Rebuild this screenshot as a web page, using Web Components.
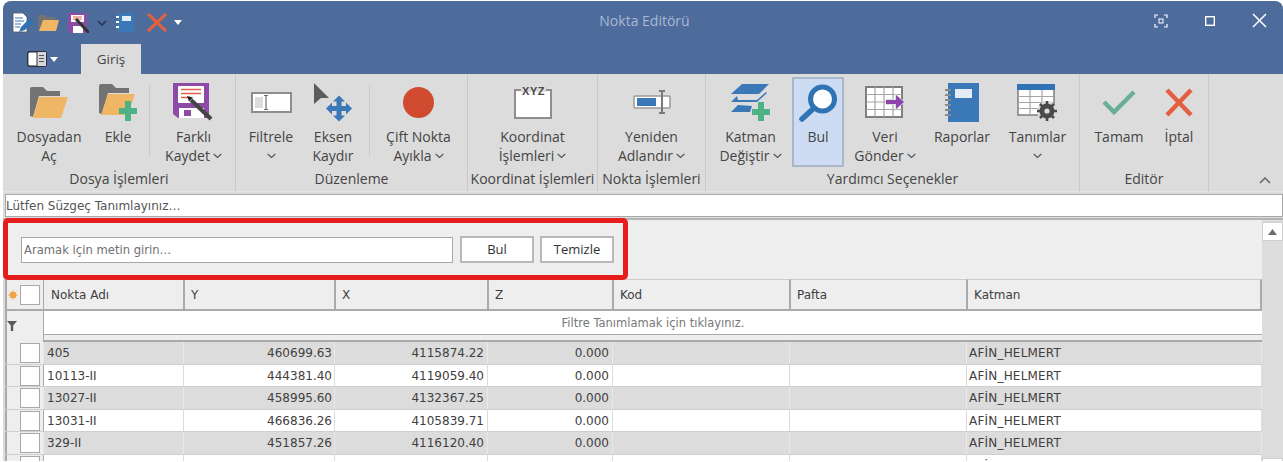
<!DOCTYPE html>
<html lang="tr">
<head>
<meta charset="utf-8">
<title>Nokta Editörü</title>
<style>
  html, body { margin: 0; padding: 0; background: #fff; overflow: hidden; }
  body { padding: 1px 0 0 3px; height: 461px; box-sizing: border-box; font-family: "Open Sans", "Noto Sans", sans-serif; }
  svg { display: block; }
</style>
</head>
<body>
<editor-window>
  <title-bar title="Nokta Editörü">
    <quick-bar slot="quick"></quick-bar>
  </title-bar>
  <editor-ribbon>
    <ribbon-group label="Dosya İşlemleri" cols="76px 62px 1px 85px" pad="8" width="233">
      <ribbon-button line1="Dosyadan" line2="Aç">
        <svg slot="icon" width="38" height="31" viewBox="0 0 38 31"><path d="M0 29V2q0-2 2-2h11l4 4h13v5H9L3 30z" fill="#737373"/><path d="M9 10h29l-7 21H3z" fill="#efb765"/></svg>
      </ribbon-button>
      <ribbon-button line1="Ekle">
        <svg slot="icon" width="38" height="37" viewBox="0 0 38 37"><path d="M0 29V2q0-2 2-2h11l4 4h13v5H9L3 30z" fill="#737373"/><path d="M9 10h27l-7 21H2z" fill="#efb765"/><path d="M26 17h6v7h6v6h-6v7h-6v-7h-6v-6h6z" fill="#4fb286"/></svg>
      </ribbon-button>
      <ribbon-sep></ribbon-sep>
      <ribbon-button line1="Farklı" line2="Kaydet" caret style="padding-left:2px">
        <svg slot="icon" width="41" height="38" viewBox="0 0 41 38"><path d="M0 0h36v35H5l-5-4z" fill="#8e4ba6"/><rect x="5" y="3" width="26" height="17" rx="1" fill="#fff"/><path d="M8 6.500h20M8 10.500h20M8 14.500h9" stroke="#e0604a" stroke-width="1.400"/><path d="M6 25h25v10H6z" fill="#fff"/><rect x="11" y="27" width="7" height="6" fill="#8e4ba6"/><path d="M18 17l20 19" stroke="#444" stroke-width="4"/><path d="M14 13l6 1.500-4 4z" fill="#222"/></svg>
      </ribbon-button>
    </ribbon-group>

    <ribbon-group label="Düzenleme" cols="52px 72px 1px 97px" pad="9" width="232">
      <ribbon-button line1="Filtrele" caret>
        <svg slot="icon" width="41" height="21" viewBox="0 0 41 21"><rect x="1" y="1" width="39" height="19" fill="#fff" stroke="#8d8d8d" stroke-width="2"/><rect x="4" y="5" width="8" height="11" fill="#dcdcdc"/><path d="M13 3.500h4M13 17.500h4M15 4v13" stroke="#6c6c6c" stroke-width="1.200" fill="none"/></svg>
      </ribbon-button>
      <ribbon-button line1="Eksen" line2="Kaydır">
        <svg slot="icon" width="38" height="39" viewBox="0 0 38 39"><path d="M0 0l15 15H7l-7 6z" fill="#5c5c5c"/><path d="M25 12.500l6 6h-3.500V23H32v-3.500l6 6-6 6V28h-4.500v4.500H31l-6 6-6-6h3.500V28H18v3.500l-6-6 6-6V23h4.500v-4.500H19z" fill="#3b78b8"/></svg>
      </ribbon-button>
      <ribbon-sep></ribbon-sep>
      <ribbon-button line1="Çift Nokta" line2="Ayıkla" caret>
        <svg slot="icon" width="31" height="31" viewBox="0 0 31 31"><circle cx="15.500" cy="15.500" r="15.500" fill="#d04a30"/></svg>
      </ribbon-button>
    </ribbon-group>

    <ribbon-group label="Koordinat İşlemleri" cols="1fr" width="130">
      <ribbon-button line1="Koordinat" line2="İşlemleri" caret>
        <svg slot="icon" width="38" height="33" viewBox="0 0 38 33"><path d="M7 4H1v28h36V4h-5" fill="#fff" stroke="#8f8f8f" stroke-width="2"/><path d="M7 0h25v8H7z" fill="#dcdcdc"/><rect x="7" y="6" width="25" height="6" fill="#fff"/><text x="19.500" y="9" text-anchor="middle" font-family="Liberation Sans, sans-serif" font-size="11" font-weight="700" fill="#4a4a4a" letter-spacing=".5">XYZ</text></svg>
      </ribbon-button>
    </ribbon-group>

    <ribbon-group label="Nokta İşlemleri" cols="1fr" width="108">
      <ribbon-button line1="Yeniden" line2="Adlandır" caret>
        <svg slot="icon" width="38" height="24" viewBox="0 0 38 24"><rect x="1" y="6" width="36" height="12" rx="1" fill="#fff" stroke="#9a9a9a" stroke-width="1.500"/><rect x="4" y="8" width="19" height="8" fill="#3b78b8"/><path d="M26 1h6M26 23h6M29 1v22" stroke="#7a7a7a" stroke-width="2" fill="none"/></svg>
      </ribbon-button>
    </ribbon-group>

    <ribbon-group label="Yardımcı Seçenekler" cols="86px 52px 80px 76px 74px" width="374">
      <ribbon-button line1="Katman" line2="Değiştir" caret style="padding-left:3px">
        <svg slot="icon" width="40" height="37" viewBox="0 0 40 37"><path d="M11 0h27l-10 10H0z" fill="#3b78b8"/><path d="M6 12l-6 6h26l10-9-1-1-9 8H7z" fill="#3b78b8"/><path d="M7 21L0 28h19l2-6z" fill="#3b78b8"/><path d="M27 18h6v7h6v6h-6v6h-6v-6h-6v-6h6z" fill="#4fb286"/></svg>
      </ribbon-button>
      <ribbon-button line1="Bul" active>
        <svg slot="icon" width="38" height="38" viewBox="0 0 38 38"><circle cx="23.500" cy="15" r="12" fill="#fff" stroke="#2f73b5" stroke-width="5"/><path d="M15 24L3 35" stroke="#2f73b5" stroke-width="5.500" stroke-linecap="round"/></svg>
      </ribbon-button>
      <ribbon-button line1="Veri" line2="Gönder" caret style="padding-left:2px">
        <svg slot="icon" width="40" height="32" viewBox="0 0 40 32"><rect x="1" y="1" width="36" height="30" fill="#fff" stroke="#7f7f7f" stroke-width="2"/><path d="M1 8.500h36M1 16h36M1 23.500h36M10 1v30M19 1v30M28 1v30" stroke="#a5a5a5" stroke-width="1.200"/><path d="M21 13h9V7l10 9-10 9v-6h-9z" fill="#dcdcdc"/><path d="M21 14h10V9l8 7-8 7v-5H21z" fill="#8e44ad"/></svg>
      </ribbon-button>
      <ribbon-button line1="Raporlar">
        <svg slot="icon" width="34" height="39" viewBox="0 0 34 39"><rect x="3" y="0" width="31" height="39" fill="#3b78b8"/><rect x="10" y="6" width="17" height="9" fill="#e3edf7"/><path d="M0 7h6M0 12h6M0 17h6M0 22h6M0 27h6M0 32h6" stroke="#8a8a8a" stroke-width="2"/></svg>
      </ribbon-button>
      <ribbon-button line1="Tanımlar" caret style="padding-left:1px">
        <svg slot="icon" width="41" height="37" viewBox="0 0 41 37"><rect x="1" y="1" width="36" height="30" fill="#fff" stroke="#7f7f7f" stroke-width="1.500"/><rect x="0" y="0" width="38" height="6" fill="#2f73b5"/><path d="M1 12.500h36M1 18.500h36M1 24.500h36M13 6v25M25 6v25" stroke="#a5a5a5" stroke-width="1.200"/><circle cx="30" cy="27" r="10" fill="#dcdcdc"/><circle cx="30" cy="27" r="5.500" fill="none" stroke="#4a4a4a" stroke-width="4"/><path d="M30 17v20M20 27h20M23 20l14 14M37 20L23 34" stroke="#4a4a4a" stroke-width="2.600"/><circle cx="30" cy="27" r="2.600" fill="#dcdcdc"/></svg>
      </ribbon-button>
    </ribbon-group>

    <ribbon-group label="Editör" cols="76px 46px" width="129">
      <ribbon-button line1="Tamam" style="padding-left:2px">
        <svg slot="icon" width="34" height="25" viewBox="0 0 34 25"><path d="M2 12l10 10L32 2" fill="none" stroke="#69ae97" stroke-width="4.500"/></svg>
      </ribbon-button>
      <ribbon-button line1="İptal">
        <svg slot="icon" width="28" height="29" viewBox="0 0 28 29"><path d="M2 2l24 25M26 2L2 27" fill="none" stroke="#e2603f" stroke-width="4.500"/></svg>
      </ribbon-button>
    </ribbon-group>
    <ribbon-collapse></ribbon-collapse>
  </editor-ribbon>
  <filter-bar>Lütfen Süzgeç Tanımlayınız…</filter-bar>
  <editor-body>
    <search-panel></search-panel>
    <point-grid></point-grid>
  </editor-body>
</editor-window>

<script>
class EditorWindow extends HTMLElement {
  constructor() {
    super();
    this.attachShadow({ mode: 'open' }).innerHTML = `
      <style>
        :host { display: flex; flex-direction: column; height: 461px; overflow: hidden; border-radius: 8px 8px 0 0; background: #dcdcdc; }
      </style>
      <slot></slot>`;
  }
}

class TitleBar extends HTMLElement {
  constructor() {
    super();
    this.attachShadow({ mode: 'open' }).innerHTML = `
      <style>
        :host { display: block; height: 73px; background: #4d6b9b; color: #a9b9d2; font: 14px "Open Sans", sans-serif; }
        .top { display: grid; grid-template-columns: 1fr auto 1fr; height: 43px; align-items: center; }
        .title { padding-left: 3px; position: relative; top: -2px; }
        .controls { display: flex; justify-content: flex-end; gap: 37px; padding: 0 16px 4px 0; align-items: center; }
        .tabs { display: flex; height: 30px; }
        .menu { display: flex; align-items: center; gap: 3px; width: 78px; padding: 0 0 0 24px; box-sizing: border-box; }
        .tab { width: 60px; background: #dcdcdc; color: #444; text-align: center; line-height: 31px; font-size: 13.500px; }
      </style>
      <div class="top">
        <slot name="quick"></slot>
        <div class="title">${this.getAttribute('title')}</div>
        <div class="controls">
          <svg width="14" height="14" viewBox="0 0 14 14"><path d="M1 4V1h3M10 1h3v3M13 10v3h-3M4 13H1v-3" fill="none" stroke="#fff" stroke-width="1.200"/><rect x="5" y="5" width="4" height="4" fill="none" stroke="#fff"/></svg>
          <svg width="10" height="10" viewBox="0 0 10 10"><rect x=".7" y=".7" width="8.600" height="8.600" fill="none" stroke="#fff" stroke-width="1.400"/></svg>
          <svg width="15" height="15" viewBox="0 0 15 15"><path d="M1 1l13 13M14 1L1 14" stroke="#fff" stroke-width="1.500"/></svg>
        </div>
      </div>
      <div class="tabs">
        <div class="menu">
          <svg width="20" height="16" viewBox="0 0 20 16"><rect x=".7" y=".7" width="18.600" height="14.600" rx="2" fill="#fff" stroke="#2d2d3c" stroke-width="1.400"/><rect x="10" y="1" width="9" height="14" fill="#d8d8d8"/><path d="M10 1v14" stroke="#2d2d3c"/><path d="M12 4.500h5M12 7.500h5M12 10.500h5" stroke="#555"/></svg>
          <svg width="8" height="5" viewBox="0 0 8 5"><path d="M0 0h8L4 5z" fill="#fff"/></svg>
        </div>
        <div class="tab">Giriş</div>
      </div>`;
  }
}

class QuickBar extends HTMLElement {
  constructor() {
    super();
    this.attachShadow({ mode: 'open' }).innerHTML = `
      <style>
        :host { display: flex; align-items: center; padding-left: 9px; }
        svg { display: block; flex: none; }
      </style>
      <svg width="21" height="20" viewBox="0 0 21 20" style="margin-right:5px"><path d="M1 0h10l4 4v15H1z" fill="#fff" stroke="#555" stroke-width=".8"/><path d="M3 5h8M3 8h9M3 11h6M3 14h5" stroke="#3b78b8"/><path d="M7 19l2-5 8-8 4 3-8 8z" fill="#2f73b5"/></svg>
      <svg width="21" height="17" viewBox="0 0 21 17" style="margin-right:9px"><path d="M0 16V1h7l2 2h8v3H5l-3 10z" fill="#737373"/><path d="M5 6h16l-3 11H1z" fill="#efb765"/></svg>
      <svg width="21" height="20" viewBox="0 0 21 20" style="margin-right:8px"><path d="M0 0h19v20H2l-2-2z" fill="#8e4ba6"/><rect x="3" y="2" width="13" height="7" fill="#fff"/><path d="M5 4h9M5 6h9" stroke="#e0604a"/><rect x="5" y="13" width="10" height="7" fill="#fff"/><path d="M8 6l13 14" stroke="#333" stroke-width="3"/></svg>
      <svg width="10" height="6" viewBox="0 0 10 6" style="margin-right:9px"><path d="M1 1l4 4 4-4" fill="none" stroke="#24344f" stroke-width="1.500"/></svg>
      <svg width="18" height="19" viewBox="0 0 18 19" style="margin-right:13px"><rect x="2" y="0" width="16" height="19" fill="#3b78b8"/><rect x="6" y="3" width="9" height="5" fill="#e3edf7"/><path d="M0 4h3M0 9h3M0 14h3" stroke="#fff" stroke-width="2"/></svg>
      <svg width="20" height="19" viewBox="0 0 20 19" style="margin-right:7px"><path d="M1 1l18 17M19 1L1 18" stroke="#e2603f" stroke-width="3.200"/></svg>
      <svg width="8" height="5" viewBox="0 0 8 5"><path d="M0 0h8L4 5z" fill="#fff"/></svg>`;
  }
}

class EditorRibbon extends HTMLElement {
  constructor() {
    super();
    this.attachShadow({ mode: 'open' }).innerHTML = `
      <style>
        :host { display: flex; height: 118px; background: #dcdcdc; color: #444; border-bottom: 1px solid #e4e4e4; font: 14px "Open Sans", sans-serif; box-sizing: border-box; }
      </style>
      <slot></slot>`;
  }
}

class RibbonGroup extends HTMLElement {
  constructor() {
    super();
    const cols = this.getAttribute('cols');
    const pad = this.getAttribute('pad') || 0;
    const width = this.getAttribute('width');
    this.attachShadow({ mode: 'open' }).innerHTML = `
      <style>
        :host { display: flex; flex-direction: column; flex: none; width: ${width}px; box-sizing: border-box; border-right: 1px solid #c9c9c9; padding-top: 3px; }
        .tools { display: grid; grid-template-columns: ${cols}; height: 89px; padding-left: ${pad}px; }
        .label { text-align: center; height: 21px; line-height: 21px; white-space: nowrap; margin-top: 2px; }
      </style>
      <div class="tools"><slot></slot></div>
      <div class="label">${this.getAttribute('label')}</div>`;
  }
}

const CARET = '<svg class="caret" width="9" height="6" viewBox="0 0 9 6"><path d="M.7 1l3.800 3.500L8.300 1" fill="none" stroke="#555" stroke-width="1.200"/></svg>';

class RibbonButton extends HTMLElement {
  constructor() {
    super();
    const l1 = this.getAttribute('line1') || '';
    const l2 = this.getAttribute('line2') || '';
    const caret = this.hasAttribute('caret');
    this.attachShadow({ mode: 'open' }).innerHTML = `
      <style>
        :host { display: block; box-sizing: border-box; text-align: center; white-space: nowrap; }
        :host([active]) { background: #cddcf3; border: 2px solid #a9b7c9; margin: 0; }
        .icon { height: 50px; display: flex; align-items: center; justify-content: center; }
        :host([active]) .icon { height: 48px; }
        .line { height: 19px; line-height: 19px; display: flex; justify-content: center; align-items: center; gap: 3px; }
        .caret { display: block; margin-top: 1px; }
      </style>
      <div class="icon"><slot name="icon"></slot></div>
      <div class="line">${l1}</div>
      <div class="line">${l2}${caret ? CARET : ''}</div>`;
  }
}

class RibbonSep extends HTMLElement {
  constructor() {
    super();
    this.attachShadow({ mode: 'open' }).innerHTML = `
      <style>:host { display: block; width: 1px; height: 71px; margin-top: 8px; background: #c9c9c9; }</style>`;
  }
}

class RibbonCollapse extends HTMLElement {
  constructor() {
    super();
    this.attachShadow({ mode: 'open' }).innerHTML = `
      <style>:host { display: flex; flex: 1; justify-content: flex-end; align-items: flex-end; padding: 0 12px 7px 0; }</style>
      <svg width="12" height="7" viewBox="0 0 12 7"><path d="M1 6l5-5 5 5" fill="none" stroke="#666" stroke-width="1.500"/></svg>`;
  }
}

class FilterBar extends HTMLElement {
  constructor() {
    super();
    this.attachShadow({ mode: 'open' }).innerHTML = `
      <style>
        :host { display: block; height: 23px; margin: 2px 0 0 2px; box-sizing: border-box; border: 1px solid #a8a8a8; background: #fff; color: #555; font: 12px/23px "DejaVu Sans", sans-serif; white-space: nowrap; }
      </style>
      <slot></slot>`;
  }
}

class EditorBody extends HTMLElement {
  constructor() {
    super();
    this.attachShadow({ mode: 'open' }).innerHTML = `
      <style>
        :host { display: flex; align-items: flex-start; margin-top: 1px; flex: 1; min-height: 0; padding-left: 2px; border-top: 2px solid #b4b4b4; background: #dcdcdc; }
        .main { flex: 1; min-width: 0; position: relative; }
        .bar { width: 21px; height: 257px; flex: none; display: flex; flex-direction: column; padding-top: 2px; box-sizing: border-box; }
        .btn { height: 19px; background: #fff; border: 1px solid #cfcfcf; box-sizing: border-box; display: flex; align-items: center; justify-content: center; flex: none; }
        .track { flex: 1; }
      </style>
      <div class="main"><slot></slot></div>
      <div class="bar">
        <div class="btn"><svg width="9" height="6" viewBox="0 0 9 6"><path d="M4.500 0L9 6H0z" fill="#6e6e6e"/></svg></div>
        <div class="track"></div>
        <div class="btn"></div>
      </div>`;
  }
}

class SearchPanel extends HTMLElement {
  constructor() {
    super();
    this.attachShadow({ mode: 'open' }).innerHTML = `
      <style>
        :host { display: flex; height: 59px; box-sizing: border-box; background: #eee; align-items: center; padding: 0 0 0 16px; position: relative; color: #444; }
        .text { width: 432px; height: 26px; box-sizing: border-box; border: 1px solid #a8a8a8; background: #fff; color: #707070; font: 11.600px/24px "DejaVu Sans", sans-serif; padding-left: 2px; margin-right: 7px; white-space: nowrap; }
        .btn { width: 74px; height: 27px; box-sizing: border-box; border: 2px solid #b8b8b8; background: #fff; font: 13px/23px "Open Sans", sans-serif; text-align: center; margin-right: 6px; color: #333; }
        .mark { position: absolute; left: -2px; top: -2px; width: 625px; height: 62px; box-sizing: border-box; border: 5px solid #e71c1c; border-radius: 5px; pointer-events: none; }
      </style>
      <div class="text">Aramak için metin girin…</div>
      <div class="btn">Bul</div>
      <div class="btn">Temizle</div>
      <div class="mark"></div>`;
  }
}

class PointGrid extends HTMLElement {
  constructor() {
    super();
    const heads = ['Nokta Adı', 'Y', 'X', 'Z', 'Kod', 'Pafta', 'Katman'];
    const rows = [
      ['405', '460699.63', '4115874.22', '0.000'],
      ['10113-II', '444381.40', '4119059.40', '0.000'],
      ['13027-II', '458995.60', '4132367.25', '0.000'],
      ['13031-II', '466836.26', '4105839.71', '0.000'],
      ['329-II', '451857.26', '4116120.40', '0.000'],
      ['354-II', '453461.60', '4103091.83', '0.000']
    ];
    const box = '<span class="box"></span>';
    this.attachShadow({ mode: 'open' }).innerHTML = `
      <style>
        :host { display: block; --cols: 39px 140px 151px 153px 125px 177px 177px 295px; color: #404040; font: 12px "DejaVu Sans", sans-serif; }
        .row { display: grid; grid-template-columns: var(--cols); }
        .head { height: 32px; background: #eee; border-bottom: 2px solid #aaa; border-left: 2px solid #aaa; box-sizing: border-box; grid-template-columns: 37px 141px 151px 153px 125px 177px 177px 294px; }
        .head > div { border-right: 2px solid #aaa; padding-left: 6px; line-height: 30px; box-sizing: border-box; border-top: 1px solid #ccc; }
        .head > div:nth-child(2) { padding-left: 7px; }
        .head > .ind { padding: 5px 0 0 1px; display: flex; gap: 2px; align-items: flex-start; line-height: 1; border-right-width: 1px; }
        .star { width: 10px; height: 10px; margin-top: 5px; flex: none; }
        .box { display: block; width: 20px; height: 20px; box-sizing: border-box; border: 1px solid #a8a8a8; background: #fff; flex: none; }
        .filter { height: 23px; background: #fff; }
        .filter .ind { background: #eee; border-left: 2px solid #aaa; border-right: 1px solid #aaa; box-sizing: border-box; padding: 10px 0 0 0; }
        .filter .note { grid-column: 2 / -1; text-align: center; line-height: 24px; color: #777; font-size: 11.500px; }
        .filter-gap { display: flex; }
        .filter-gap i { width: 39px; background: #eee; border-left: 2px solid #aaa; border-right: 1px solid #aaa; box-sizing: border-box; height: 8px; flex: none; }
        .gap { flex: 1; height: 8px; box-sizing: border-box; background: #eee; border-top: 1px solid #aaa; border-bottom: 2px solid #aaa; }
        .data { height: 22.500px; box-sizing: border-box; border-bottom: 1px solid #cfcfcf; background: #fff; }
        .data.odd { background: #dcdcdc; }
        .data > div { padding: 0 3px; line-height: 23px; white-space: nowrap; border-right: 1px solid #dcdcdc; box-sizing: border-box; overflow: hidden; }
        .data.odd > div { border-right-color: #e8e8e8; }
        .data > .num { text-align: right; }
        .data > .num:nth-child(3) { padding-right: 2px; }
        .data > div:last-child { padding-left: 2px; letter-spacing: .2px; }
        .data > .ind { background: #eee; border-left: 2px solid #aaa; border-right: 1px solid #aaa; padding: 1px 0 0 13px; line-height: 1; }
      </style>
      <div class="row head">
        <div class="ind"><svg class="star" viewBox="0 0 10 10"><circle cx="5" cy="5" r="3.200" fill="#f2a24a"/><path d="M5 0v10M0 5h10M1.500 1.500l7 7M8.500 1.500l-7 7" stroke="#f2a24a" stroke-width=".9"/></svg>${box}</div>
        ${heads.map(h => `<div>${h}</div>`).join('')}
      </div>
      <div class="row filter">
        <div class="ind"><svg width="10" height="10" viewBox="0 0 10 10" style="display:block"><path d="M0 0h10L6.200 4.500V10H3.800V4.500z" fill="#595959"/></svg></div>
        <div class="note">Filtre Tanımlamak için tıklayınız.</div>
      </div>
      <div class="filter-gap"><i></i><div class="gap"></div></div>
      ${rows.map((r, i) => `
        <div class="row data ${i % 2 ? '' : 'odd'}">
          <div class="ind">${box}</div>
          <div>${r[0]}</div>
          <div class="num">${r[1]}</div>
          <div class="num">${r[2]}</div>
          <div class="num">${r[3]}</div>
          <div></div><div></div>
          <div>AFİN_HELMERT</div>
        </div>`).join('')}`;
  }
}

customElements.define('editor-window', EditorWindow);
customElements.define('title-bar', TitleBar);
customElements.define('quick-bar', QuickBar);
customElements.define('editor-ribbon', EditorRibbon);
customElements.define('ribbon-group', RibbonGroup);
customElements.define('ribbon-button', RibbonButton);
customElements.define('ribbon-sep', RibbonSep);
customElements.define('ribbon-collapse', RibbonCollapse);
customElements.define('filter-bar', FilterBar);
customElements.define('editor-body', EditorBody);
customElements.define('search-panel', SearchPanel);
customElements.define('point-grid', PointGrid);
</script>
</body>
</html>
